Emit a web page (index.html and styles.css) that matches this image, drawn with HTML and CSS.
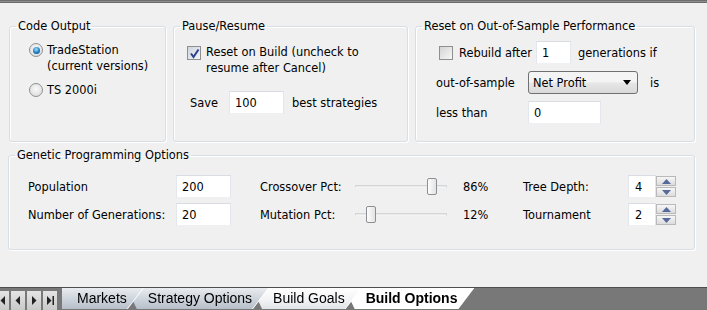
FILE: index.html
```html
<!DOCTYPE html>
<html lang="en">
<head>
  <meta charset="UTF-8" />
  <title>Build Options</title>
  <link rel="stylesheet" href="styles.css">
</head>
<body>
  <div class="top-strip"></div>

  <main class="panel">
    <div class="top-row">
      <fieldset class="group code-output">
        <legend>Code Output</legend>
        <div class="group-body">
          <div class="radio-row">
            <span class="radio checked"></span>
            <span>TradeStation<br>(current versions)</span>
          </div>
          <div class="radio-row">
            <span class="radio"></span>
            <span>TS 2000i</span>
          </div>
        </div>
      </fieldset>

      <fieldset class="group pause">
        <legend>Pause/Resume</legend>
        <div class="group-body">
          <div class="check-row">
            <span class="checkbox checked">
              <svg width="11" height="11" viewBox="0 0 11 11"><path d="M2 5.5 L4.5 9 L9.5 1.5" fill="none" stroke="#2b3f8c" stroke-width="2"/></svg>
            </span>
            <span>Reset on Build (uncheck to<br>resume after Cancel)</span>
          </div>
          <div class="save-row">
            <span>Save</span>
            <input class="text save" value="100" readonly>
            <span>best strategies</span>
          </div>
        </div>
      </fieldset>

      <fieldset class="group oos">
        <legend>Reset on Out-of-Sample Performance</legend>
        <div class="group-body">
          <div class="oos-row first">
            <span class="checkbox"></span>
            <span>Rebuild after</span>
            <input class="text gens" value="1" readonly>
            <span class="after-input">generations if</span>
          </div>
          <div class="oos-row">
            <span class="oos-label">out-of-sample</span>
            <div class="select">Net Profit<span class="arrow"></span></div>
            <span class="is">is</span>
          </div>
          <div class="oos-row">
            <span class="oos-label">less than</span>
            <input class="text less" value="0" readonly>
          </div>
        </div>
      </fieldset>
    </div>

    <fieldset class="group gpo">
      <legend>Genetic Programming Options</legend>
      <div class="group-body gpo-grid">
        <span>Population</span>
        <input class="text num" value="200" readonly>
        <span>Crossover Pct:</span>
        <div class="slider"><div class="thumb" style="left: 71px"></div></div>
        <span>86%</span>
        <span>Tree Depth:</span>
        <div class="spinner">
          <input class="text spin" value="4" readonly>
          <div class="spin-buttons">
            <span class="spin-btn"><svg width="9" height="5" viewBox="0 0 9 5"><path d="M0 5 L4.5 0 L9 5 Z" fill="#56699a"/></svg></span>
            <span class="spin-btn"><svg width="9" height="5" viewBox="0 0 9 5"><path d="M0 0 L9 0 L4.5 5 Z" fill="#56699a"/></svg></span>
          </div>
        </div>

        <span>Number of Generations:</span>
        <input class="text num" value="20" readonly>
        <span>Mutation Pct:</span>
        <div class="slider"><div class="thumb" style="left: 10px"></div></div>
        <span>12%</span>
        <span>Tournament</span>
        <div class="spinner">
          <input class="text spin" value="2" readonly>
          <div class="spin-buttons">
            <span class="spin-btn"><svg width="9" height="5" viewBox="0 0 9 5"><path d="M0 5 L4.5 0 L9 5 Z" fill="#56699a"/></svg></span>
            <span class="spin-btn"><svg width="9" height="5" viewBox="0 0 9 5"><path d="M0 0 L9 0 L4.5 5 Z" fill="#56699a"/></svg></span>
          </div>
        </div>
      </div>
    </fieldset>
  </main>

  <footer class="tabbar">
    <div class="tab-nav">
      <span class="nav-btn"><svg width="8" height="9" viewBox="0 0 8 9"><path d="M0 0 H1.5 V9 H0 Z M7 0 V9 L2.5 4.5 Z" fill="#222"/></svg></span>
      <span class="nav-btn"><svg width="8" height="9" viewBox="0 0 8 9"><path d="M6 0 V9 L1.5 4.5 Z" fill="#222"/></svg></span>
      <span class="nav-btn"><svg width="8" height="9" viewBox="0 0 8 9"><path d="M2 0 V9 L6.5 4.5 Z" fill="#222"/></svg></span>
      <span class="nav-btn"><svg width="8" height="9" viewBox="0 0 8 9"><path d="M1 0 V9 L5.5 4.5 Z M6.5 0 H8 V9 H6.5 Z" fill="#222"/></svg></span>
    </div>
    <div class="tabs">
      <div class="tab t1"><div class="tab-face">Markets</div></div>
      <div class="tab t2"><div class="tab-face">Strategy Options</div></div>
      <div class="tab t3"><div class="tab-face light">Build Goals</div></div>
      <div class="tab t4"><div class="tab-face active">Build Options</div></div>
    </div>
  </footer>
</body>
</html>
```

FILE: styles.css
```css
/* Pagina geral */
body {
  margin: 0;
  height: 310px;
  overflow: hidden;
  display: flex;
  flex-direction: column;
  background-color: #f0f0f0;
  font-family: "DejaVu Sans", sans-serif;
  font-size: 11.4px;
  line-height: 16px;
  color: #000;
}

.top-strip {
  height: 3px;
  background: linear-gradient(#5e5e5e, #8d8d8d 50%, #5a5a5a);
}

.panel {
  padding: 16px 0 0 0;
}

/* Caixas de grupo */
.top-row {
  display: flex;
  gap: 7px;
  padding-left: 9px;
}

.group {
  box-sizing: border-box;
  margin: 0;
  min-width: 0;
  border: 1px solid #d5dfe5;
  border-radius: 3px;
  box-shadow: inset 1px 1px 0 #fff, 1px 1px 0 #fff;
  padding: 0;
}

.group legend {
  margin-left: 6px;
  padding: 0 2px;
  line-height: 14px;
}

.code-output {
  width: 157px;
  height: 123px;
}

.code-output .group-body {
  padding: 9px 0 0 19px;
}

.pause {
  width: 235px;
  height: 123px;
}

.pause .group-body {
  padding: 11px 0 0 13px;
}

.oos {
  width: 280px;
  height: 123px;
}

.oos .group-body {
  padding: 8px 0 0 20px;
}

.gpo {
  width: 687px;
  height: 102px;
  margin: 6px 0 0 8px;
}

.gpo .group-body {
  padding: 13px 0 0 19px;
}

/* Radio e checkbox */
.radio-row {
  display: flex;
  align-items: flex-start;
  gap: 4px;
  margin-bottom: 8px;
}

.radio {
  box-sizing: border-box;
  width: 14px;
  height: 14px;
  margin-top: 1px;
  border: 1px solid #8e8f8f;
  border-radius: 50%;
  background: radial-gradient(circle at 50% 40%, #fafafa, #d6d6d6);
  display: flex;
  align-items: center;
  justify-content: center;
}

.radio.checked::after {
  content: "";
  width: 7px;
  height: 7px;
  border-radius: 50%;
  background: radial-gradient(circle at 45% 35%, #a6e0ff, #1c7cc2 55%, #14466f);
}

.check-row {
  display: flex;
  align-items: flex-start;
  gap: 5px;
}

.checkbox {
  box-sizing: border-box;
  width: 14px;
  height: 14px;
  flex: none;
  border: 1px solid #8e8f8f;
  background: linear-gradient(135deg, #d4d4d4, #f7f7f7);
  display: flex;
  align-items: center;
  justify-content: center;
}

.check-row .checkbox {
  margin-top: 2px;
}

.checkbox.checked {
  background: linear-gradient(135deg, #cfd5de, #f2f4f8);
}

/* Campos de texto */
.text {
  box-sizing: border-box;
  height: 23px;
  margin: 0;
  padding: 0 0 0 5px;
  font: inherit;
  color: #000;
  background: #fff;
  border: 1px solid;
  border-color: #d9dce2 #e3e6ec #eef0f3 #e3e6ec;
  outline: none;
}

.save-row {
  display: flex;
  align-items: center;
  margin: 15px 0 0 3px;
}

.text.save {
  width: 55px;
  margin: 0 8px 0 11px;
}

.oos-row {
  display: flex;
  align-items: center;
  height: 23px;
  margin-top: 7px;
}

.oos-row.first {
  margin-top: 0;
}

.oos-row.first .checkbox {
  margin: 0 6px 0 3px;
}

.text.gens {
  width: 35px;
  margin-left: 4px;
}

.after-input {
  margin-left: 7px;
}

.oos-label {
  width: 92px;
}

.select {
  box-sizing: border-box;
  width: 110px;
  height: 23px;
  padding: 0 0 0 4px;
  display: flex;
  align-items: center;
  border: 1px solid #707070;
  border-radius: 3px;
  background: linear-gradient(#f4f4f4 45%, #e6e6e6 55%, #d9d9d9);
}

.select .arrow {
  margin-left: auto;
  margin-right: 6px;
  width: 0;
  height: 0;
  border-left: 4px solid transparent;
  border-right: 4px solid transparent;
  border-top: 5px solid #000;
}

.is {
  margin-left: 12px;
}

.text.less {
  width: 73px;
}

/* Opcoes de programacao genetica */
.gpo-grid {
  display: grid;
  grid-template-columns: 148px 84px 95px 108px 60px 105px auto;
  grid-template-rows: 23px 23px;
  row-gap: 5px;
  align-items: center;
}

.text.num {
  width: 55px;
}

.slider {
  position: relative;
  width: 92px;
  height: 3px;
  border: 1px solid #d6d6d6;
  border-bottom-color: #f4f4f4;
  background: #e7eaea;
  box-sizing: border-box;
}

.thumb {
  position: absolute;
  top: -8px;
  width: 10px;
  height: 17px;
  box-sizing: border-box;
  border: 1px solid #8c8f94;
  border-radius: 2px;
  background: linear-gradient(90deg, #fdfdfd, #e3e3e3);
}

.spinner {
  display: flex;
}

.text.spin {
  width: 28px;
  padding-left: 6px;
}

.spin-buttons {
  display: flex;
  flex-direction: column;
  gap: 1px;
  padding-top: 1px;
}

.spin-btn {
  box-sizing: border-box;
  width: 20px;
  height: 10px;
  display: flex;
  align-items: center;
  justify-content: center;
  border: 1px solid #b9b9b9;
  background: linear-gradient(#f6f6f6, #dcdcdc);
}

/* Abas */
.tabbar {
  margin-top: auto;
  height: 22px;
  display: flex;
  border-top: 1px solid #4e4e4e;
  background: #787878;
  font-family: "Liberation Sans", Arial, sans-serif;
  font-size: 14px;
}

.tab-nav {
  display: flex;
  gap: 2px;
  margin: 3px 5px 0 -5px;
}

.nav-btn {
  width: 14px;
  height: 19px;
  display: flex;
  align-items: center;
  justify-content: center;
  background: linear-gradient(#e4e4e4, #c9c9c9);
}

.tabs {
  display: flex;
}

.tab {
  position: relative;
  filter: drop-shadow(1px 0 0 #fff);
}

.tab + .tab {
  margin-left: -16px;
}

.t1 { z-index: 4; }
.t2 { z-index: 3; }
.t3 { z-index: 2; }
.t4 { z-index: 1; }

.tab-face {
  height: 21px;
  line-height: 21px;
  padding: 0 16px 0 21px;
  color: #000;
  background: linear-gradient(#e9ecf0, #cdd3db 55%, #b7bfca);
  clip-path: polygon(0 0, 100% 0, calc(100% - 16px) 100%, 10px 100%);
}

.t1 .tab-face {
  padding-left: 15px;
  clip-path: polygon(0 0, 100% 0, calc(100% - 16px) 100%, 0 100%);
}

.tab-face.light {
  background: linear-gradient(#ffffff, #f1f2f4 60%, #dfe2e6);
}

.tab-face.active {
  font-weight: bold;
  background: #fff;
}
```
